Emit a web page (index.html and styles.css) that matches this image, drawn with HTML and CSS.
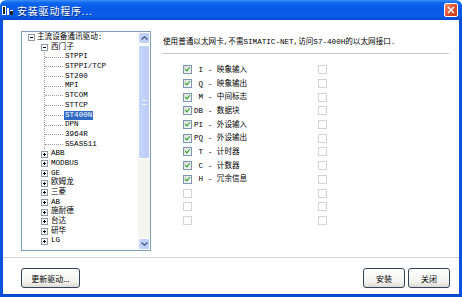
FILE: index.html
```html
<!DOCTYPE html>
<html lang="zh-CN">
<head>
  <meta charset="UTF-8">
  <title>安装驱动程序...</title>
  <link rel="stylesheet" href="styles.css">
</head>
<body>
  <div class="window">
    <div class="titlebar">
      <svg class="app-icon" width="11" height="11" viewBox="0 0 11 11">
        <rect x="0" y="1" width="4" height="9" fill="#fff"/>
        <rect x="1" y="2" width="2" height="7" fill="#222"/>
        <rect x="5" y="3" width="2" height="7" fill="#fff"/>
        <rect x="8" y="5" width="3" height="5" fill="#222"/>
        <rect x="8" y="5" width="3" height="1" fill="#fff"/>
      </svg>
      <span class="title">安装驱动程序...</span>
      <span class="close-btn">
        <svg width="8" height="8" viewBox="0 0 8 8"><path d="M1 1L7 7M7 1L1 7" stroke="#fff" stroke-width="1.6"/></svg>
      </span>
    </div>

    <div class="frame">
      <div class="main">
        <div class="tree">
          <div class="tree-list">
            <div class="node lvl0"><span class="exp minus"></span>主流设备通讯驱动:</div>
            <div class="node lvl1"><span class="exp minus"></span>西门子</div>
            <div class="branch">
              <div class="leaf"><span class="hline"></span>STPPI</div>
              <div class="leaf"><span class="hline"></span>STPPI/TCP</div>
              <div class="leaf"><span class="hline"></span>ST200</div>
              <div class="leaf"><span class="hline"></span>MPI</div>
              <div class="leaf"><span class="hline"></span>STCOM</div>
              <div class="leaf"><span class="hline"></span>STTCP</div>
              <div class="leaf"><span class="hline"></span><span class="selected">ST400N</span></div>
              <div class="leaf"><span class="hline"></span>DPN</div>
              <div class="leaf"><span class="hline"></span>3964R</div>
              <div class="leaf"><span class="hline"></span>S5AS511</div>
            </div>
            <div class="node lvl1"><span class="exp plus"></span>ABB</div>
            <div class="node lvl1"><span class="exp plus"></span>MODBUS</div>
            <div class="node lvl1"><span class="exp plus"></span>GE</div>
            <div class="node lvl1"><span class="exp plus"></span>欧姆龙</div>
            <div class="node lvl1"><span class="exp plus"></span>三菱</div>
            <div class="node lvl1"><span class="exp plus"></span>AB</div>
            <div class="node lvl1"><span class="exp plus"></span>施耐德</div>
            <div class="node lvl1"><span class="exp plus"></span>台达</div>
            <div class="node lvl1"><span class="exp plus"></span>研华</div>
            <div class="node lvl1"><span class="exp plus"></span>LG</div>
          </div>
          <div class="scrollbar">
            <div class="sb-btn">
              <svg width="7" height="4" viewBox="0 0 7 4"><path d="M0.5 3.5L3.5 0.8L6.5 3.5" fill="none" stroke="#4d6185" stroke-width="1.4"/></svg>
            </div>
            <div class="sb-thumb"><span class="grip"></span></div>
            <div class="sb-track"></div>
            <div class="sb-btn">
              <svg width="7" height="4" viewBox="0 0 7 4"><path d="M0.5 0.5L3.5 3.2L6.5 0.5" fill="none" stroke="#4d6185" stroke-width="1.4"/></svg>
            </div>
          </div>
        </div>

        <div class="panel">
          <div class="desc">使用普通以太网卡,不需SIMATIC-NET,访问S7-400H的以太网接口.</div>
          <div class="checks">
            <div class="check-row"><div class="cell"><span class="cb on"></span><span class="label"> I - 映象输入</span></div><span class="cb off"></span></div>
            <div class="check-row"><div class="cell"><span class="cb on"></span><span class="label"> Q - 映象输出</span></div><span class="cb off"></span></div>
            <div class="check-row"><div class="cell"><span class="cb on"></span><span class="label"> M - 中间标志</span></div><span class="cb off"></span></div>
            <div class="check-row"><div class="cell"><span class="cb on"></span><span class="label">DB - 数据块</span></div><span class="cb off"></span></div>
            <div class="check-row"><div class="cell"><span class="cb on"></span><span class="label">PI - 外设输入</span></div><span class="cb off"></span></div>
            <div class="check-row"><div class="cell"><span class="cb on"></span><span class="label">PQ - 外设输出</span></div><span class="cb off"></span></div>
            <div class="check-row"><div class="cell"><span class="cb on"></span><span class="label"> T - 计时器</span></div><span class="cb off"></span></div>
            <div class="check-row"><div class="cell"><span class="cb on"></span><span class="label"> C - 计数器</span></div><span class="cb off"></span></div>
            <div class="check-row"><div class="cell"><span class="cb on"></span><span class="label"> H - 冗余信息</span></div><span class="cb off"></span></div>
            <div class="check-row"><div class="cell"><span class="cb off"></span></div><span class="cb off"></span></div>
            <div class="check-row"><div class="cell"><span class="cb off"></span></div><span class="cb off"></span></div>
            <div class="check-row"><div class="cell"><span class="cb off"></span></div><span class="cb off"></span></div>
          </div>
        </div>
      </div>

      <div class="footer">
        <button class="btn btn-update">更新驱动...</button>
        <div class="spacer"></div>
        <button class="btn btn-small">安装</button>
        <button class="btn btn-small">关闭</button>
      </div>
    </div>
  </div>
</body>
</html>
```

FILE: styles.css
```css
* {
  box-sizing: border-box;
}
body {
  margin: 0;
  background: #fff;
  font-family: "Liberation Mono", "Noto Sans CJK SC", monospace;
  font-size: 7.6px;
  color: #000;
}
.window {
  width: 462px;
  height: 297px;
  display: flex;
  flex-direction: column;
}
.titlebar {
  height: 20px;
  display: flex;
  align-items: center;
  padding: 0 4px 0 2px;
  background: linear-gradient(#3d8ff9 0, #0d66ee 3px, #0758e6 45%, #0a5de9 80%, #0648d2 100%);
  border-radius: 6px 6px 0 0;
}
.app-icon {
  margin-right: 4px;
}
.title {
  color: #fff;
  font-family: "Noto Sans CJK SC", sans-serif;
  font-size: 10px;
  letter-spacing: 0.8px;
  text-shadow: 1px 1px 0 #0a2f8a;
}
.close-btn {
  margin-left: auto;
  width: 14px;
  height: 14px;
  border: 1px solid #fff;
  border-radius: 2px;
  background: linear-gradient(135deg, #f0936f, #e0502b 50%, #c63a14);
  display: flex;
  align-items: center;
  justify-content: center;
}
.frame {
  flex: 1;
  display: flex;
  flex-direction: column;
  background: #fff;
  border-left: 3px solid #0a52dc;
  border-right: 3px solid #0a52dc;
  border-bottom: 3px solid #0a4bd0;
}
.main {
  display: flex;
  padding: 11px 0 6px 18px;
  border-bottom: 1px solid #d3d3d3;
}

/* tree */
.tree {
  width: 130px;
  height: 220px;
  border: 1px solid #7f9db9;
  display: flex;
}
.tree-list {
  flex: 1;
  padding-top: 1px;
  overflow: hidden;
}
.node, .leaf {
  height: 9.7px;
  line-height: 9.7px;
  display: flex;
  align-items: center;
  white-space: nowrap;
}
.lvl0 {
  padding-left: 6px;
}
.lvl1 {
  padding-left: 19px;
}
.exp {
  width: 7px;
  height: 7px;
  border: 1px solid #8c9aa8;
  background: #fff;
  margin-right: 3px;
  position: relative;
  flex-shrink: 0;
}
.exp::before {
  content: "";
  position: absolute;
  left: 1px;
  top: 2px;
  width: 3px;
  height: 1px;
  background: #000;
}
.plus::after {
  content: "";
  position: absolute;
  left: 2px;
  top: 1px;
  width: 1px;
  height: 3px;
  background: #000;
}
.lvl0 .exp {
  margin-right: 2px;
}
.branch {
  margin-left: 22px;
  border-left: 1px dotted #a0a0a0;
}
.hline {
  width: 18px;
  border-top: 1px dotted #a0a0a0;
  margin-right: 2px;
}
.selected {
  background: #316ac5;
  color: #fff;
  padding: 0 1px;
  margin-left: -1px;
}

/* scrollbar */
.scrollbar {
  width: 12px;
  display: flex;
  flex-direction: column;
  background: #f4f4f0;
}
.sb-btn {
  height: 12px;
  border: 1px solid #fff;
  border-radius: 2px;
  background: linear-gradient(90deg, #c8d6fb, #b9cbf6);
  display: flex;
  align-items: center;
  justify-content: center;
}
.sb-thumb {
  height: 114px;
  margin-top: 1px;
  border: 1px solid #fff;
  border-radius: 2px;
  background: linear-gradient(90deg, #c6d5fc, #bccdf8);
  display: flex;
  align-items: center;
  justify-content: center;
}
.grip {
  width: 5px;
  height: 5px;
  border-top: 1px solid #eef3ff;
  border-bottom: 1px solid #eef3ff;
}
.sb-track {
  flex: 1;
}

/* right panel */
.panel {
  width: 287px;
  margin-left: 11px;
}
.desc {
  padding: 6px 0 6px 1px;
  line-height: 10px;
  white-space: nowrap;
  border-bottom: 1px solid #c8c8c8;
}
.checks {
  margin-top: 9px;
  padding-left: 21px;
}
.check-row {
  height: 13.7px;
  display: flex;
  align-items: center;
}
.cell {
  width: 135px;
  display: flex;
  align-items: center;
}
.cb {
  width: 9px;
  height: 9px;
  flex-shrink: 0;
  position: relative;
}
.cb.on {
  border: 1px solid #7d97b2;
  background: linear-gradient(135deg, #dcdcd5, #fdfdfb);
}
.cb.on::after {
  content: "";
  position: absolute;
  left: 2px;
  top: 0px;
  width: 2px;
  height: 4px;
  border-right: 1.5px solid #21a121;
  border-bottom: 1.5px solid #21a121;
  transform: rotate(40deg);
}
.cb.off {
  border: 1px solid #d4d4d4;
  background: #fff;
}
.label {
  white-space: pre;
  margin-left: 2px;
  line-height: 10px;
}

/* footer */
.footer {
  flex: 1;
  border-top: 1px solid #fff;
  display: flex;
  align-items: flex-start;
  padding: 9px 9px 0 18px;
}
.spacer {
  flex: 1;
}
.btn {
  height: 20px;
  border: 1px solid #33445a;
  border-radius: 3px;
  background: linear-gradient(#ffffff, #f3f3ef 70%, #dcdbd2);
  font-family: "Noto Sans CJK SC", sans-serif;
  font-size: 8px;
  color: #000;
  padding: 0;
}
.btn-update {
  width: 59px;
}
.btn-small {
  width: 42px;
  margin-left: 3px;
}
```
